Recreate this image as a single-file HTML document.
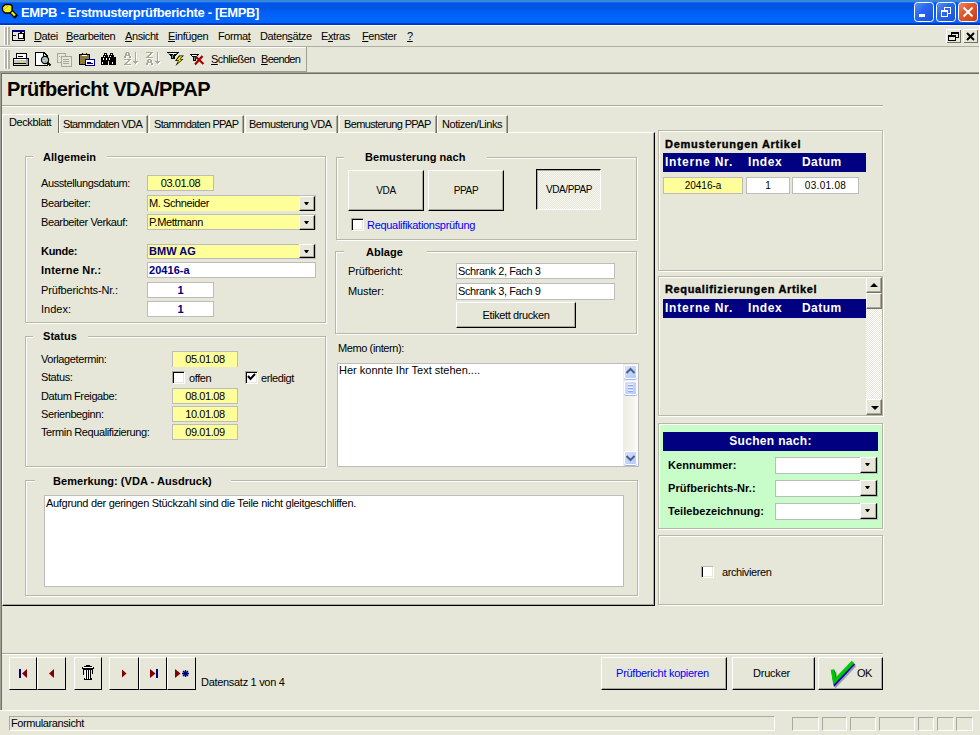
<!DOCTYPE html>
<html><head><meta charset="utf-8">
<style>
*{margin:0;padding:0;box-sizing:border-box}
html,body{width:980px;height:735px;overflow:hidden;background:#E6E7D8;font-family:"Liberation Sans",sans-serif;font-size:11px;color:#000}
.a{position:absolute}
.t{position:absolute;white-space:nowrap;font-size:11px;line-height:13px;letter-spacing:-0.4px}
.b{font-weight:bold;letter-spacing:0.05px}
.fld{position:absolute;border:1px solid #BCBCBC;background:#fff}
.yel{background:#FFFF99}
.grp{position:absolute;border:1px solid #B8B6A8;box-shadow:inset 1px 1px 0 #fff,1px 1px 0 #fff}
.gt{position:absolute;background:#E6E7D8;font-weight:bold;white-space:nowrap;line-height:13px;height:13px;letter-spacing:0.05px}
.btn{position:absolute;background:#E6E7D8;border-top:1px solid #fff;border-left:1px solid #fff;border-right:1px solid #000;border-bottom:1px solid #000;box-shadow:inset -1px -1px 0 #ACA899;text-align:center;white-space:nowrap;letter-spacing:-0.4px}
.nb{box-shadow:none}
.sb{border-right-color:#716F64;border-bottom-color:#716F64}
.dd{position:absolute;width:16px;background:#E6E7D8;border-top:1px solid #fff;border-left:1px solid #fff;border-right:1px solid #000;border-bottom:1px solid #000;box-shadow:inset -1px -1px 0 #ACA899}
.dd:after{content:"";position:absolute;left:4px;top:5px;width:5px;height:3px;background:#000;clip-path:polygon(0 0,5px 0,3px 3px,2px 3px)}
.chk{position:absolute;width:13px;height:13px;background:#fff;border-top:1px solid #ACA899;border-left:1px solid #ACA899;border-right:1px solid #fff;border-bottom:1px solid #fff;box-shadow:inset 1px 1px 0 #000,inset -1px -1px 0 #E6E7D8}
.tab{position:absolute;top:115px;height:18px;border-top:1px solid #fff;border-left:1px solid #fff;border-right:1px solid #716F64;box-shadow:inset -1px 0 0 #ACA899}
.bar{position:absolute;background:#000080;color:#fff;font-weight:bold;font-size:12px;line-height:19px;white-space:nowrap}
</style></head><body>
<!-- title bar -->
<div class="a" style="left:0;top:0;width:980px;height:25px;background:linear-gradient(#3A84DC 0,#3A84DC 2px,#0A6AF8 2px,#0A6AF8 3px,#0056E2 3px,#0054E4 8px,#0060F6 12px,#0066FC 20px,#0064F6 23px,#0040D8 23px,#0030C0 25px)"></div>
<div class="t b" style="left:21px;top:5px;color:#fff;font-size:13px;line-height:15px;letter-spacing:-0.35px">EMPB - Erstmusterprüfberichte - [EMPB]</div>
<!-- menu bar -->
<div class="a" style="left:0;top:25px;width:980px;height:1px;background:#FFFFF8"></div>
<div class="a" style="left:0;top:46px;width:980px;height:1px;background:#B0AFA3"></div>
<div class="a" style="left:0;top:47px;width:306px;height:1px;background:#fff"></div>
<div class="t" style="left:34px;top:30px"><u>D</u>atei</div>
<div class="t" style="left:66px;top:30px"><u>B</u>earbeiten</div>
<div class="t" style="left:125px;top:30px"><u>A</u>nsicht</div>
<div class="t" style="left:168px;top:30px"><u>E</u>infügen</div>
<div class="t" style="left:218px;top:30px">Forma<u>t</u></div>
<div class="t" style="left:260px;top:30px">Daten<u>s</u>ätze</div>
<div class="t" style="left:321px;top:30px">E<u>x</u>tras</div>
<div class="t" style="left:362px;top:30px"><u>F</u>enster</div>
<div class="t" style="left:407px;top:30px"><u>?</u></div>
<!-- toolbar -->
<div class="a" style="left:306px;top:47px;width:1px;height:25px;background:#A09F94"></div>
<div class="a" style="left:0;top:71px;width:307px;height:1px;background:#A09F94"></div>
<div class="t" style="left:211px;top:53px;letter-spacing:-0.57px"><u>S</u>chließen</div>
<div class="t" style="left:261px;top:53px;letter-spacing:-0.69px"><u>B</u>eenden</div>
<div class="a" style="left:0;top:72px;width:980px;height:1px;background:#A09F94"></div>
<!-- form header -->
<div class="a" style="left:0;top:73px;width:1px;height:637px;background:#A09F94"></div>
<div class="a" style="left:1px;top:73px;width:979px;height:1px;background:#716F64"></div>
<div class="a" style="left:1px;top:73px;width:1px;height:637px;background:#716F64"></div>
<div class="t b" style="left:7px;top:77px;font-size:20px;line-height:24px;letter-spacing:-0.5px">Prüfbericht VDA/PPAP</div>
<div class="a" style="left:2px;top:105px;width:881px;height:1px;background:#ACA899"></div>
<div class="a" style="left:2px;top:106px;width:881px;height:1px;background:#fff"></div>
<!-- tabs -->
<div class="a" style="left:2px;top:132px;width:653px;height:474px;border-top:1px solid #fff;border-left:1px solid #fff;border-right:1px solid #000;border-bottom:1px solid #000;box-shadow:inset -1px -1px 0 #ACA899"></div>
<div class="tab" style="left:59px;width:89px"></div>
<div class="t" style="left:63px;top:118px;letter-spacing:-0.64px">Stammdaten VDA</div>
<div class="tab" style="left:149px;width:95px"></div>
<div class="t" style="left:154px;top:118px;letter-spacing:-0.64px">Stammdaten PPAP</div>
<div class="tab" style="left:245px;width:93px"></div>
<div class="t" style="left:249px;top:118px;letter-spacing:-0.58px">Bemusterung VDA</div>
<div class="tab" style="left:339px;width:98px"></div>
<div class="t" style="left:344px;top:118px;letter-spacing:-0.65px">Bemusterung PPAP</div>
<div class="tab" style="left:437px;width:71px"></div>
<div class="t" style="left:442px;top:118px;letter-spacing:-0.46px">Notizen/Links</div>
<div class="a" style="left:2px;top:114px;width:57px;height:19px;background:#E6E7D8;border-top:1px solid #fff;border-left:1px solid #fff;border-right:1px solid #716F64"></div>
<div class="t" style="left:9px;top:116px">Deckblatt</div>

<!-- Allgemein -->
<div class="grp" style="left:25px;top:156px;width:301px;height:167px"></div>
<div class="gt" style="left:33px;top:151px;width:74px;padding-left:10px">Allgemein</div>
<div class="t" style="left:41px;top:177px">Ausstellungsdatum:</div>
<div class="fld yel" style="left:147px;top:175px;width:67px;height:16px"></div>
<div class="t" style="left:147px;top:177px;width:67px;text-align:center">03.01.08</div>
<div class="t" style="left:41px;top:197px">Bearbeiter:</div>
<div class="fld yel" style="left:147px;top:195px;width:169px;height:16px;border-bottom:none"></div>
<div class="t" style="left:149px;top:197px">M. Schneider</div>
<div class="dd" style="left:299px;top:196px;height:15px"></div>
<div class="t" style="left:41px;top:216px">Bearbeiter Verkauf:</div>
<div class="fld yel" style="left:147px;top:214px;width:169px;height:16px"></div>
<div class="t" style="left:149px;top:216px">P.Mettmann</div>
<div class="dd" style="left:299px;top:215px;height:15px"></div>
<div class="t b" style="left:41px;top:245px;letter-spacing:-0.3px">Kunde:</div>
<div class="fld yel" style="left:147px;top:244px;width:169px;height:15px"></div>
<div class="t b" style="left:149px;top:245px;color:#000080">BMW AG</div>
<div class="dd" style="left:299px;top:244px;height:14px"></div>
<div class="t b" style="left:41px;top:264px;letter-spacing:0.2px">Interne Nr.:</div>
<div class="fld" style="left:147px;top:262px;width:169px;height:16px"></div>
<div class="t b" style="left:149px;top:264px;color:#000080">20416-a</div>
<div class="t" style="left:41px;top:284px;letter-spacing:-0.15px">Prüfberichts-Nr.:</div>
<div class="fld" style="left:147px;top:282px;width:67px;height:16px"></div>
<div class="t b" style="left:147px;top:284px;width:67px;text-align:center;color:#000080">1</div>
<div class="t" style="left:41px;top:303px;letter-spacing:0">Index:</div>
<div class="fld" style="left:147px;top:301px;width:67px;height:16px"></div>
<div class="t b" style="left:147px;top:303px;width:67px;text-align:center;color:#000080">1</div>
<!-- Status -->
<div class="grp" style="left:25px;top:336px;width:301px;height:131px"></div>
<div class="gt" style="left:33px;top:330px;width:55px;padding-left:10px">Status</div>
<div class="t" style="left:41px;top:353px">Vorlagetermin:</div>
<div class="fld yel" style="left:172px;top:351px;width:66px;height:16px;border-bottom:none"></div>
<div class="t" style="left:172px;top:353px;width:66px;text-align:center">05.01.08</div>
<div class="t" style="left:41px;top:371px">Status:</div>
<div class="chk" style="left:172px;top:371px"></div>
<div class="t" style="left:189px;top:372px">offen</div>
<div class="chk" style="left:245px;top:371px"></div>
<div class="t" style="left:261px;top:372px">erledigt</div>
<div class="t" style="left:41px;top:390px">Datum Freigabe:</div>
<div class="fld yel" style="left:172px;top:388px;width:66px;height:16px"></div>
<div class="t" style="left:172px;top:390px;width:66px;text-align:center">08.01.08</div>
<div class="t" style="left:41px;top:408px">Serienbeginn:</div>
<div class="fld yel" style="left:172px;top:406px;width:66px;height:16px"></div>
<div class="t" style="left:172px;top:408px;width:66px;text-align:center">10.01.08</div>
<div class="t" style="left:41px;top:426px">Termin Requalifizierung:</div>
<div class="fld yel" style="left:172px;top:424px;width:66px;height:16px"></div>
<div class="t" style="left:172px;top:426px;width:66px;text-align:center">09.01.09</div>

<!-- Bemerkung -->
<div class="grp" style="left:25px;top:480px;width:613px;height:116px"></div>
<div class="gt" style="left:35px;top:475px;width:196px;padding-left:18px">Bemerkung: (VDA - Ausdruck)</div>
<div class="fld" style="left:44px;top:495px;width:580px;height:92px"></div>
<div class="t" style="left:46px;top:497px;letter-spacing:-0.31px">Aufgrund der geringen Stückzahl sind die Teile nicht gleitgeschliffen.</div>

<!-- Bemusterung nach -->
<div class="grp" style="left:336px;top:157px;width:301px;height:83px"></div>
<div class="gt" style="left:344px;top:151px;width:143px;padding-left:21px">Bemusterung nach</div>
<div class="btn" style="left:348px;top:170px;width:76px;height:41px;line-height:39px;font-size:10px;letter-spacing:-0.3px">VDA</div>
<div class="btn" style="left:428px;top:170px;width:76px;height:41px;line-height:39px;font-size:10px;letter-spacing:-0.3px">PPAP</div>
<div class="a" style="left:536px;top:169px;width:65px;height:41px;border-top:1px solid #000;border-left:1px solid #000;border-right:1px solid #fff;border-bottom:1px solid #fff;box-shadow:inset 1px 1px 0 #ACA899;background:repeating-conic-gradient(#F6F5EF 0 25%,#E6E7D8 0 50%) 0 0/2px 2px;text-align:center;line-height:40px;font-size:10px;letter-spacing:-0.4px;padding-left:1px">VDA/PPAP</div>
<div class="chk" style="left:351px;top:218px"></div>
<div class="t" style="left:367px;top:219px;color:#0000FF;letter-spacing:-0.3px">Requalifikationsprüfung</div>

<!-- Ablage -->
<div class="grp" style="left:335px;top:251px;width:302px;height:83px"></div>
<div class="gt" style="left:344px;top:246px;width:83px;padding-left:22px">Ablage</div>
<div class="t" style="left:348px;top:265px;letter-spacing:-0.1px">Prüfbericht:</div>
<div class="fld" style="left:456px;top:263px;width:159px;height:16px"></div>
<div class="t" style="left:458px;top:265px">Schrank 2, Fach 3</div>
<div class="t" style="left:348px;top:285px;letter-spacing:-0.12px">Muster:</div>
<div class="fld" style="left:456px;top:283px;width:159px;height:17px"></div>
<div class="t" style="left:458px;top:285px">Schrank 3, Fach 9</div>
<div class="btn" style="left:456px;top:302px;width:120px;height:26px;line-height:24px">Etikett drucken</div>

<!-- Memo -->
<div class="t" style="left:338px;top:342px">Memo (intern):</div>
<div class="fld" style="left:337px;top:363px;width:302px;height:104px"></div>
<div class="t" style="left:339px;top:364px;letter-spacing:0">Her konnte Ihr Text stehen....</div>
<div class="a" style="left:623px;top:364px;width:15px;height:102px;background:linear-gradient(90deg,#EEEDE5 0,#F3F2EC 60%,#FDFDFA 100%)"></div>
<div class="a" style="left:624px;top:365px;width:13px;height:14px;background:linear-gradient(135deg,#D4E0FE,#B4CAFA);border:1px solid #fff;border-radius:2px;box-shadow:0 1px 0 #9DB5EA"></div>
<div class="a" style="left:624px;top:381px;width:13px;height:14px;background:linear-gradient(135deg,#D4E0FE,#B4CAFA);border:1px solid #fff;border-radius:2px;box-shadow:0 1px 0 #9DB5EA"></div>
<div class="a" style="left:624px;top:451px;width:13px;height:14px;background:linear-gradient(135deg,#D4E0FE,#B4CAFA);border:1px solid #fff;border-radius:2px;box-shadow:0 1px 0 #9DB5EA"></div>
<!-- Right panels -->
<div class="grp" style="left:658px;top:130px;width:225px;height:141px"></div>
<div class="t b" style="left:665px;top:138px;letter-spacing:0.75px;-webkit-text-stroke:0.35px #000">Demusterungen Artikel</div>
<div class="bar" style="left:663px;top:153px;width:203px;height:19px"><span class="a" style="left:2px;letter-spacing:0.79px">Interne Nr.</span><span class="a" style="left:85px;letter-spacing:0.6px">Index</span><span class="a" style="left:139px;letter-spacing:0.43px">Datum</span></div>
<div class="fld yel" style="left:663px;top:177px;width:80px;height:17px"></div>
<div class="t" style="left:663px;top:179px;width:80px;text-align:center;font-size:10px;letter-spacing:0">20416-a</div>
<div class="fld" style="left:746px;top:177px;width:44px;height:17px"></div>
<div class="t" style="left:746px;top:179px;width:44px;text-align:center;font-size:10px;letter-spacing:0">1</div>
<div class="fld" style="left:792px;top:177px;width:67px;height:17px"></div>
<div class="t" style="left:792px;top:179px;width:67px;text-align:center;font-size:10px;letter-spacing:0.3px">03.01.08</div>

<div class="grp" style="left:658px;top:276px;width:225px;height:140px"></div>
<div class="t b" style="left:665px;top:283px;letter-spacing:0.65px;-webkit-text-stroke:0.35px #000">Requalifizierungen Artikel</div>
<div class="bar" style="left:663px;top:299px;width:203px;height:19px"><span class="a" style="left:2px;letter-spacing:0.79px">Interne Nr.</span><span class="a" style="left:85px;letter-spacing:0.6px">Index</span><span class="a" style="left:139px;letter-spacing:0.43px">Datum</span></div>
<div class="a" style="left:866px;top:277px;width:16px;height:138px;background:repeating-conic-gradient(#fff 0 25%,#E6E7D8 0 50%) 0 0/2px 2px"></div>
<div class="btn sb" style="left:866px;top:277px;width:16px;height:16px"></div>
<div class="a" style="left:871px;top:283px;border-left:4px solid transparent;border-right:4px solid transparent;border-bottom:4px solid #000;width:0;height:0;margin-left:-1px"></div>
<div class="btn sb" style="left:866px;top:293px;width:16px;height:16px"></div>
<div class="btn sb" style="left:866px;top:399px;width:16px;height:16px"></div>
<div class="a" style="left:871px;top:406px;border-left:4px solid transparent;border-right:4px solid transparent;border-top:4px solid #000;width:0;height:0"></div>

<div class="grp" style="left:658px;top:423px;width:225px;height:106px;background:#C8FCC8"></div>
<div class="bar" style="left:663px;top:432px;width:215px;height:19px;text-align:center;font-size:12px;letter-spacing:0.33px">Suchen nach:</div>
<div class="t b" style="left:668px;top:459px">Kennummer:</div>
<div class="fld" style="left:775px;top:457px;width:103px;height:17px"></div>
<div class="dd" style="left:860px;top:457px;height:16px;width:17px"></div>
<div class="t b" style="left:668px;top:482px">Prüfberichts-Nr.:</div>
<div class="fld" style="left:775px;top:480px;width:103px;height:17px"></div>
<div class="dd" style="left:860px;top:480px;height:16px;width:17px"></div>
<div class="t b" style="left:668px;top:505px">Teilebezeichnung:</div>
<div class="fld" style="left:775px;top:503px;width:103px;height:17px"></div>
<div class="dd" style="left:860px;top:503px;height:16px;width:17px"></div>

<div class="grp" style="left:658px;top:535px;width:225px;height:70px"></div>
<div class="chk" style="left:701px;top:566px;height:12px;box-shadow:inset 1px 0 0 #000,inset -1px -1px 0 #E6E7D8;border-top-color:#BDBCB0"></div>
<div class="t" style="left:722px;top:566px">archivieren</div>

<!-- footer -->
<div class="a" style="left:2px;top:653px;width:881px;height:1px;background:#ACA899"></div>
<div class="a" style="left:2px;top:654px;width:881px;height:1px;background:#fff"></div>
<div class="btn nb" style="left:9px;top:657px;width:28px;height:33px"></div>
<div class="btn nb" style="left:37px;top:657px;width:29px;height:33px"></div>
<div class="btn nb" style="left:74px;top:657px;width:28px;height:33px"></div>
<div class="btn nb" style="left:109px;top:657px;width:30px;height:33px"></div>
<div class="btn nb" style="left:139px;top:657px;width:28px;height:33px"></div>
<div class="btn nb" style="left:167px;top:657px;width:29px;height:33px"></div>
<div class="t" style="left:201px;top:676px;letter-spacing:-0.3px">Datensatz 1 von 4</div>
<div class="btn" style="left:601px;top:657px;width:126px;height:33px;line-height:31px;color:#0000FF;letter-spacing:-0.28px;padding-right:3px">Prüfbericht kopieren</div>
<div class="btn" style="left:732px;top:657px;width:83px;height:33px;line-height:31px;padding-right:4px;letter-spacing:-0.2px">Drucker</div>
<div class="btn" style="left:818px;top:657px;width:65px;height:33px;line-height:31px"><span style="padding-left:28px">OK</span></div>
<div class="a" style="left:0;top:710px;width:980px;height:25px;background:#E6E7D8;border-top:1px solid #fff"></div>
<div class="a" style="left:979px;top:26px;width:1px;height:685px;background:#fff"></div>
<div class="a" style="left:9px;top:716px;width:766px;height:15px;border-top:1px solid #ACA899;border-left:1px solid #ACA899;border-right:1px solid #fff;border-bottom:1px solid #fff"></div>
<div class="t" style="left:11px;top:717px">Formularansicht</div>
<div class="a" style="left:792px;top:717px;width:27px;height:14px;border:1px solid #ACA899;border-right-color:#fff;border-bottom-color:#fff"></div>
<div class="a" style="left:822px;top:717px;width:25px;height:14px;border:1px solid #ACA899;border-right-color:#fff;border-bottom-color:#fff"></div>
<div class="a" style="left:850px;top:717px;width:26px;height:14px;border:1px solid #ACA899;border-right-color:#fff;border-bottom-color:#fff"></div>
<div class="a" style="left:879px;top:717px;width:36px;height:14px;border:1px solid #ACA899;border-right-color:#fff;border-bottom-color:#fff"></div>
<div class="a" style="left:918px;top:717px;width:16px;height:14px;border:1px solid #ACA899;border-right-color:#fff;border-bottom-color:#fff"></div>
<div class="a" style="left:937px;top:717px;width:17px;height:14px;border:1px solid #ACA899;border-right-color:#fff;border-bottom-color:#fff"></div>
<div class="a" style="left:956px;top:717px;width:17px;height:14px;border:1px solid #ACA899;border-right-color:#fff;border-bottom-color:#fff"></div>
<svg class="a" style="left:0;top:0" width="980" height="735" viewBox="0 0 980 735" shape-rendering="crispEdges">
<!-- title key icon -->
<g shape-rendering="geometricPrecision">
<path d="M10.5,11 L15,15.5" stroke="#000" stroke-width="4.5" stroke-linecap="square"/>
<path d="M10.5,11 L15,15.5" stroke="#F0F000" stroke-width="2.2"/>
<polygon points="5,4.5 10.5,4.5 12,6 12,11 10,13 5,13 2.5,10.5 2.5,7" fill="#F4F400" stroke="#000" stroke-width="1.3"/>
<path d="M4,10 L9,5" stroke="#A8A890" stroke-width="1"/>
</g>
<!-- window buttons -->
<g shape-rendering="geometricPrecision">
<defs><linearGradient id="gb" x1="0" y1="0" x2="1" y2="1"><stop offset="0" stop-color="#5C92F8"/><stop offset="0.4" stop-color="#2C68EE"/><stop offset="1" stop-color="#1A50D8"/></linearGradient>
<linearGradient id="gr" x1="0" y1="0" x2="1" y2="1"><stop offset="0" stop-color="#F08A6A"/><stop offset="0.4" stop-color="#E0582E"/><stop offset="1" stop-color="#C83E14"/></linearGradient></defs>
<rect x="914.5" y="2.5" width="19" height="19" rx="3" fill="url(#gb)" stroke="#fff"/>
<rect x="936.5" y="2.5" width="19" height="19" rx="3" fill="url(#gb)" stroke="#fff"/>
<rect x="958.5" y="2.5" width="19" height="19" rx="3" fill="url(#gr)" stroke="#fff"/>
</g>
<rect x="919" y="14" width="6" height="3" fill="#fff"/>
<rect x="944" y="7" width="6" height="6" fill="none" stroke="#fff" stroke-width="1"/>
<rect x="944" y="7" width="6" height="1" fill="#fff"/>
<rect x="941" y="10.5" width="6" height="6" fill="#2A68F0" stroke="#fff" stroke-width="1"/>
<rect x="941" y="10" width="7" height="2" fill="#fff"/>
<path d="M963.5,7.5 L972.5,16.5 M972.5,7.5 L963.5,16.5" stroke="#fff" stroke-width="2" shape-rendering="geometricPrecision"/>
<!-- menu grip -->
<rect x="4" y="27" width="1" height="18" fill="#fff"/><rect x="5" y="27" width="2" height="18" fill="#B5B4A6"/>
<rect x="7" y="27" width="1" height="18" fill="#fff"/><rect x="8" y="27" width="2" height="18" fill="#B5B4A6"/>
<rect x="4" y="50" width="1" height="19" fill="#fff"/><rect x="5" y="50" width="2" height="19" fill="#B5B4A6"/>
<rect x="7" y="50" width="1" height="19" fill="#fff"/><rect x="8" y="50" width="2" height="19" fill="#B5B4A6"/>
<!-- menu icon -->
<rect x="12" y="30" width="13" height="11" fill="#000"/>
<rect x="12" y="30" width="13" height="2" fill="#000080"/>
<rect x="13" y="32" width="11" height="8" fill="#E4E4E4"/>
<rect x="13" y="35" width="3" height="1" fill="#000"/>
<rect x="18" y="33" width="6" height="1" fill="#000"/><rect x="18" y="38" width="6" height="1" fill="#000"/>
<rect x="18" y="33" width="1" height="6" fill="#000"/><rect x="23" y="33" width="1" height="6" fill="#000"/>
<rect x="19" y="34" width="4" height="4" fill="#fff"/><rect x="20" y="32" width="2" height="1" fill="#000"/>
<!-- MDI buttons -->
<rect x="946" y="29" width="15" height="14" fill="#fff"/><rect x="947" y="30" width="14" height="13" fill="#716F64"/><rect x="947" y="30" width="13" height="12" fill="#E6E7D8"/>
<rect x="963" y="29" width="15" height="14" fill="#fff"/><rect x="964" y="30" width="14" height="13" fill="#716F64"/><rect x="964" y="30" width="13" height="12" fill="#E6E7D8"/>
<rect x="951" y="32" width="7" height="5" fill="none" stroke="#000"/><rect x="951" y="32" width="7" height="2" fill="#000"/>
<rect x="948.5" y="35.5" width="7" height="5" fill="#E6E7D8" stroke="#000"/><rect x="948" y="35" width="8" height="2" fill="#000"/>
<path d="M967,33 L974,40 M974,33 L967,40" stroke="#000" stroke-width="2" shape-rendering="geometricPrecision"/>
<!-- printer -->
<rect x="16" y="53" width="11" height="5" fill="#000"/><rect x="17" y="54" width="9" height="4" fill="#fff"/><rect x="18" y="56" width="5" height="1" fill="#000"/>
<rect x="13" y="58" width="16" height="8" fill="#000" rx="1"/><rect x="14" y="59" width="14" height="1" fill="#fff"/><rect x="14" y="60" width="12" height="3" fill="#C8C8C8"/><rect x="20" y="62" width="3" height="1" fill="#E8E800"/><rect x="14" y="64" width="12" height="1" fill="#D8D8D8"/><rect x="26" y="59" width="2" height="6" fill="#A0A0A0"/>
<!-- preview -->
<path d="M35.5,52.5 H44 L47.5,56 V65.5 H35.5 Z" fill="#fff" stroke="#000" stroke-width="1"/>
<path d="M43.5,52.5 V56.5 H47.5" fill="none" stroke="#000" stroke-width="1"/>
<circle cx="45" cy="60" r="3.6" fill="#C0C0C0" stroke="#000" stroke-width="1.2" shape-rendering="geometricPrecision"/><rect x="43" y="59" width="2" height="1" fill="#00E8F8"/><rect x="45" y="61" width="1" height="1" fill="#00E8F8"/>
<path d="M47.5,62.5 L50.5,65.5" stroke="#000" stroke-width="2" shape-rendering="geometricPrecision"/>
<!-- copy disabled -->
<rect x="57" y="53" width="8" height="9" fill="none" stroke="#A8A79C"/><rect x="61" y="56" width="10" height="10" fill="#E6E7D8" stroke="#A8A79C"/>
<rect x="59" y="56" width="1" height="1" fill="#A8A79C"/><rect x="63" y="59" width="6" height="1" fill="#A8A79C"/><rect x="63" y="61" width="6" height="1" fill="#A8A79C"/><rect x="63" y="63" width="6" height="1" fill="#A8A79C"/>
<!-- paste -->
<rect x="79" y="54" width="11" height="11" fill="#000" rx="1"/><rect x="80" y="55" width="9" height="9" fill="#8A7A3A"/><rect x="82" y="53" width="5" height="3" fill="#000"/><rect x="83" y="53" width="3" height="1" fill="#E8E800"/><rect x="82" y="55" width="5" height="1" fill="#fff"/>
<rect x="85" y="59" width="10" height="7" fill="#000080"/><rect x="86" y="60" width="8" height="5" fill="#fff"/><rect x="87" y="62" width="4" height="1" fill="#000080"/><rect x="87" y="63" width="6" height="1" fill="#000080"/>
<!-- binoculars -->
<g fill="#000">
<rect x="104" y="53" width="3" height="2"/><rect x="103" y="55" width="5" height="2"/><rect x="101" y="57" width="7" height="8"/>
<rect x="110" y="53" width="3" height="2"/><rect x="109" y="55" width="5" height="2"/><rect x="109" y="57" width="7" height="8"/>
<rect x="108" y="57" width="1" height="4"/>
</g>
<g fill="#fff"><rect x="105" y="54" width="1" height="1"/><rect x="111" y="54" width="1" height="1"/><rect x="104" y="56" width="1" height="1"/><rect x="110" y="56" width="1" height="1"/><rect x="103" y="58" width="1" height="2"/><rect x="109" y="58" width="1" height="2"/><rect x="106" y="58" width="1" height="2"/><rect x="102" y="62" width="1" height="2"/><rect x="112" y="62" width="1" height="2"/></g>
<!-- sort az / za disabled -->
<g fill="#fff"><rect x="127" y="53" width="3" height="1"/><rect x="126" y="54" width="2" height="2"/><rect x="129" y="54" width="2" height="2"/><rect x="126" y="56" width="5" height="1"/><rect x="125" y="57" width="2" height="1"/><rect x="130" y="57" width="2" height="1"/><rect x="125" y="58" width="2" height="1"/><rect x="130" y="58" width="2" height="1"/><rect x="125" y="60" width="7" height="1"/><rect x="129" y="61" width="2" height="1"/><rect x="128" y="62" width="2" height="1"/><rect x="127" y="63" width="2" height="1"/><rect x="126" y="64" width="2" height="1"/><rect x="125" y="65" width="7" height="1"/><rect x="136" y="53" width="1" height="9"/><rect x="134" y="62" width="5" height="1"/><rect x="135" y="63" width="3" height="1"/><rect x="136" y="64" width="1" height="1"/><rect x="147" y="53" width="7" height="1"/><rect x="151" y="54" width="2" height="1"/><rect x="150" y="55" width="2" height="1"/><rect x="149" y="56" width="2" height="1"/><rect x="148" y="57" width="2" height="1"/><rect x="147" y="58" width="7" height="1"/><rect x="149" y="60" width="3" height="1"/><rect x="148" y="61" width="2" height="2"/><rect x="151" y="61" width="2" height="2"/><rect x="148" y="63" width="5" height="1"/><rect x="147" y="64" width="2" height="1"/><rect x="152" y="64" width="2" height="1"/><rect x="147" y="65" width="2" height="1"/><rect x="152" y="65" width="2" height="1"/><rect x="158" y="53" width="1" height="9"/><rect x="156" y="62" width="5" height="1"/><rect x="157" y="63" width="3" height="1"/><rect x="158" y="64" width="1" height="1"/></g>
<g fill="#A8A899"><rect x="126" y="52" width="3" height="1"/><rect x="125" y="53" width="2" height="2"/><rect x="128" y="53" width="2" height="2"/><rect x="125" y="55" width="5" height="1"/><rect x="124" y="56" width="2" height="1"/><rect x="129" y="56" width="2" height="1"/><rect x="124" y="57" width="2" height="1"/><rect x="129" y="57" width="2" height="1"/><rect x="124" y="59" width="7" height="1"/><rect x="128" y="60" width="2" height="1"/><rect x="127" y="61" width="2" height="1"/><rect x="126" y="62" width="2" height="1"/><rect x="125" y="63" width="2" height="1"/><rect x="124" y="64" width="7" height="1"/><rect x="135" y="52" width="1" height="9"/><rect x="133" y="61" width="5" height="1"/><rect x="134" y="62" width="3" height="1"/><rect x="135" y="63" width="1" height="1"/><rect x="146" y="52" width="7" height="1"/><rect x="150" y="53" width="2" height="1"/><rect x="149" y="54" width="2" height="1"/><rect x="148" y="55" width="2" height="1"/><rect x="147" y="56" width="2" height="1"/><rect x="146" y="57" width="7" height="1"/><rect x="148" y="59" width="3" height="1"/><rect x="147" y="60" width="2" height="2"/><rect x="150" y="60" width="2" height="2"/><rect x="147" y="62" width="5" height="1"/><rect x="146" y="63" width="2" height="1"/><rect x="151" y="63" width="2" height="1"/><rect x="146" y="64" width="2" height="1"/><rect x="151" y="64" width="2" height="1"/><rect x="157" y="52" width="1" height="9"/><rect x="155" y="61" width="5" height="1"/><rect x="156" y="62" width="3" height="1"/><rect x="157" y="63" width="1" height="1"/></g>
<!-- filter -->
<path d="M167,52 h12 v1 l-4,3 v3 h-4 v-3 l-4,-3z" fill="#000"/><rect x="169" y="53" width="8" height="1" fill="#fff"/><rect x="168" y="53" width="1" height="1" fill="#30B0B0"/><rect x="176" y="53" width="1" height="1" fill="#30B0B0"/><rect x="172" y="55" width="1" height="3" fill="#30B0B0"/><rect x="173" y="54" width="1" height="1" fill="#C0C0C0"/>
<path d="M179,55.5 h5 l-3.5,3.5 h3 l-8,7 l2.5,-5 h-3z" fill="#000" shape-rendering="geometricPrecision"/>
<path d="M179.8,56.3 h2.6 l-3.2,3.3 h2.8 l-4.6,4 l1.6,-3.3 h-2.5z" fill="#F8F000" shape-rendering="geometricPrecision"/>
<!-- remove filter -->
<path d="M190,54 h9 v1 l-3,2 v4 h-3 v-4 l-3,-2z" fill="#000"/><rect x="192" y="55" width="5" height="1" fill="#fff"/><rect x="194" y="57" width="1" height="3" fill="#30B0B0"/>
<path d="M195.5,56.5 L203.5,64 M202.5,56 L195,64.5" stroke="#A00000" stroke-width="2.2" shape-rendering="geometricPrecision"/>
<!-- check erledigt -->
<path d="M248,376 L250.5,379 L255,374" stroke="#000" stroke-width="2" fill="none" shape-rendering="geometricPrecision"/>
<!-- memo scroll chevrons -->
<path d="M626.5,373 L630.5,369 L634.5,373" stroke="#4D6185" stroke-width="2" fill="none" shape-rendering="geometricPrecision"/>
<path d="M626.5,456 L630.5,460 L634.5,456" stroke="#4D6185" stroke-width="2" fill="none" shape-rendering="geometricPrecision"/>
<rect x="628" y="384" width="5" height="1" fill="#EEF3FF"/><rect x="628" y="385" width="5" height="1" fill="#8DA8E8"/>
<rect x="628" y="387" width="5" height="1" fill="#EEF3FF"/><rect x="628" y="388" width="5" height="1" fill="#8DA8E8"/>
<rect x="628" y="390" width="5" height="1" fill="#EEF3FF"/><rect x="628" y="391" width="5" height="1" fill="#8DA8E8"/>
<!-- nav icons -->
<rect x="19" y="669" width="2" height="9" fill="#000080"/>
<path d="M22,673.5 L27,669 L27,678z" fill="#800000" shape-rendering="geometricPrecision"/>
<path d="M49,673.5 L54,669 L54,678z" fill="#800000" shape-rendering="geometricPrecision"/>
<path d="M122,669.5 L126.5,673.5 L122,677.5z" fill="#800000" shape-rendering="geometricPrecision"/>
<path d="M150,669 L155.5,673.5 L150,678z" fill="#800000" shape-rendering="geometricPrecision"/>
<rect x="156" y="669" width="2" height="9" fill="#000080"/>
<path d="M175,669 L180.5,673.5 L175,678z" fill="#800000" shape-rendering="geometricPrecision"/>
<g stroke="#000080" stroke-width="1.4" shape-rendering="geometricPrecision"><path d="M185.5,670 v7 M182,673.5 h7 M183,671 l5,5 M188,671 l-5,5"/></g>
<!-- trash -->
<rect x="84" y="666" width="8" height="1" fill="#000"/><rect x="86" y="665" width="4" height="1" fill="#000"/>
<rect x="82" y="667" width="12" height="2" fill="#000"/><rect x="83" y="667" width="10" height="1" fill="#fff"/>
<path d="M83,669 h10 l-1,11 h-8z" fill="#000"/><rect x="85" y="670" width="1" height="9" fill="#fff"/><rect x="87" y="670" width="1" height="9" fill="#fff"/><rect x="89" y="670" width="1" height="9" fill="#fff"/><rect x="84" y="670" width="1" height="8" fill="#E6E7D8"/><rect x="91" y="670" width="1" height="8" fill="#E6E7D8"/>
<!-- OK check -->
<g shape-rendering="geometricPrecision" fill="none" stroke-linejoin="miter">
<path d="M834.5,672 L836.5,684.5 L855,665" stroke="#A0A0A0" stroke-width="3.6"/>
<path d="M833.2,670.8 L835.2,683 L853.8,663.3" stroke="#0000D0" stroke-width="3.6"/>
<path d="M832.5,669.5 L834.5,681.2 L853,662" stroke="#00C800" stroke-width="3.6"/>
</g>
</svg>
</body></html>
